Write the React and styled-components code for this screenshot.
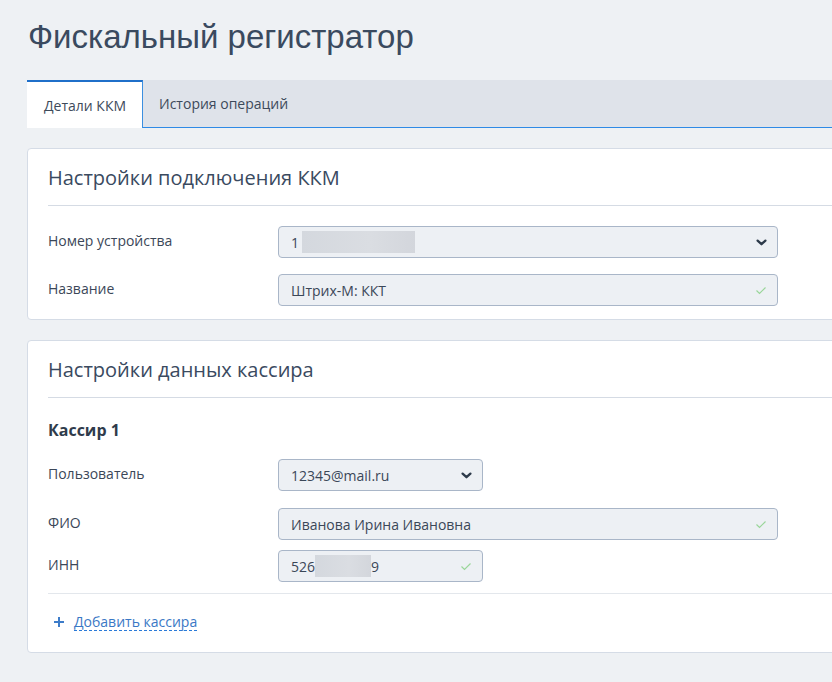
import React from 'react';
import styled, { createGlobalStyle } from 'styled-components';

const GlobalStyle = createGlobalStyle`
  html, body {
    margin: 0;
    padding: 0;
    background: #eef1f4;
    overflow: hidden;
  }
  body {
    font-family: "Open Sans", "Liberation Sans", Arial, sans-serif;
    color: #3b4758;
  }
`;

const Page = styled.div`
  width: 860px;
  padding: 0 0 40px 27px;
`;

const Title = styled.h1`
  margin: 0;
  padding: 17px 0 0 1px;
  height: 80px;
  box-sizing: border-box;
  font-family: "Liberation Sans", Arial, sans-serif;
  font-weight: 400;
  font-size: 33px;
  line-height: 40px;
  color: #3a4a5f;
`;

const TabBar = styled.div`
  display: flex;
  height: 48px;
  background: #dfe3ea;
  border-bottom: 1px solid #2e8ae6;
  box-sizing: border-box;
`;

const Tab = styled.div`
  display: flex;
  align-items: center;
  padding: 0 17px 0 16px;
  font-size: 14px;
  color: #3d4a5a;
  box-sizing: border-box;
  ${p => p.active && `
    background: #ffffff;
    border-top: 2px solid #1f6fc9;
    border-right: 1px solid #3b8fe0;
    height: 48px;
    margin-bottom: -1px;
    padding: 0 16px 0 17px;
  `}
`;

const Card = styled.section`
  margin-top: 20px;
  background: #ffffff;
  border: 1px solid #d5dce6;
  border-radius: 4px;
`;

const CardHeader = styled.h2`
  margin: 0 0 0 20px;
  padding: 15px 0 13px;
  border-bottom: 1px solid #d5dbe4;
  font-size: 20px;
  font-weight: 400;
  line-height: 28px;
  color: #3a4a5f;
`;

const CardBody = styled.div`
  padding: ${p => p.pad || '20px 0 13px 20px'};
  display: flex;
  flex-direction: column;
`;

const Row = styled.div`
  display: grid;
  grid-template-columns: 230px auto;
  align-items: center;
  margin-top: ${p => p.gap || 0}px;
`;

const Label = styled.div`
  font-size: 14px;
  line-height: 20px;
  color: #3b4758;
  margin-top: -2px;
`;

const Field = styled.div`
  width: ${p => (p.short ? 205 : 500)}px;
  height: 32px;
  box-sizing: border-box;
  display: flex;
  align-items: center;
  padding: 0 8px 0 12px;
  background: #edf0f4;
  border: 1px solid #a9b6c8;
  border-radius: 4px;
  font-size: 14px;
  color: #3b4758;
`;

const Value = styled.span`
  flex: 1;
  display: flex;
  align-items: center;
  white-space: nowrap;
`;

const Blur = styled.span`
  display: inline-block;
  height: 22px;
  width: ${p => p.w}px;
  margin-left: ${p => p.ml || 0}px;
  background: linear-gradient(90deg, #d4d8de, #dadde2 60%, #d3d6dc);
`;

const SubTitle = styled.div`
  margin-top: 21px;
  font-size: 16px;
  font-weight: 700;
  line-height: 22px;
  color: #2f3b4b;
`;

const Divider = styled.div`
  margin-top: 11px;
  border-top: 1px solid #e3e7ec;
`;

const AddRow = styled.div`
  display: flex;
  align-items: center;
  gap: 10px;
  padding: 19px 0 21px 6px;
  line-height: 22px;
`;

const AddLink = styled.a`
  font-size: 14px;
  color: #3a78c5;
  text-decoration: none;
  border-bottom: 1px dashed #2a7ad8;
  line-height: 17px;
  cursor: pointer;
`;

const Chevron = () => (
  <svg width="11" height="7" viewBox="0 0 11 7" style={{ marginRight: 2 }}>
    <path d="M1.6 1.6l3.9 3.6 3.9-3.6" fill="none" stroke="#2d3a4a" strokeWidth="2.3" strokeLinecap="round" strokeLinejoin="round" />
  </svg>
);

const Check = () => (
  <svg width="12" height="9" viewBox="0 0 12 9" style={{ marginRight: 2 }}>
    <path d="M1.5 4.5l3 3L10.5 1.5" fill="none" stroke="#9ad69a" strokeWidth="1.2" />
  </svg>
);

const Plus = () => (
  <svg width="10" height="10" viewBox="0 0 10 10">
    <path d="M5 0v10M0 5h10" stroke="#3d7cc9" strokeWidth="2" />
  </svg>
);

export default function App() {
  return (
    <>
      <GlobalStyle />
      <Page>
        <Title>Фискальный регистратор</Title>
        <TabBar>
          <Tab active>Детали ККМ</Tab>
          <Tab>История операций</Tab>
        </TabBar>

        <Card>
          <CardHeader>Настройки подключения ККМ</CardHeader>
          <CardBody>
            <Row>
              <Label>Номер устройства</Label>
              <Field>
                <Value>1<Blur w={113} ml={3} /></Value>
                <Chevron />
              </Field>
            </Row>
            <Row gap={16}>
              <Label>Название</Label>
              <Field>
                <Value>Штрих-М: ККТ</Value>
                <Check />
              </Field>
            </Row>
          </CardBody>
        </Card>

        <Card>
          <CardHeader>Настройки данных кассира</CardHeader>
          <CardBody pad="0 0 0 20px">
            <SubTitle>Кассир 1</SubTitle>
            <Row gap={18}>
              <Label>Пользователь</Label>
              <Field short>
                <Value>12345@mail.ru</Value>
                <Chevron />
              </Field>
            </Row>
            <Row gap={17}>
              <Label>ФИО</Label>
              <Field>
                <Value>Иванова Ирина Ивановна</Value>
                <Check />
              </Field>
            </Row>
            <Row gap={10}>
              <Label>ИНН</Label>
              <Field short>
                <Value>526<Blur w={56} />9</Value>
                <Check />
              </Field>
            </Row>
            <Divider />
            <AddRow>
              <Plus />
              <AddLink>Добавить кассира</AddLink>
            </AddRow>
          </CardBody>
        </Card>
      </Page>
    </>
  );
}
